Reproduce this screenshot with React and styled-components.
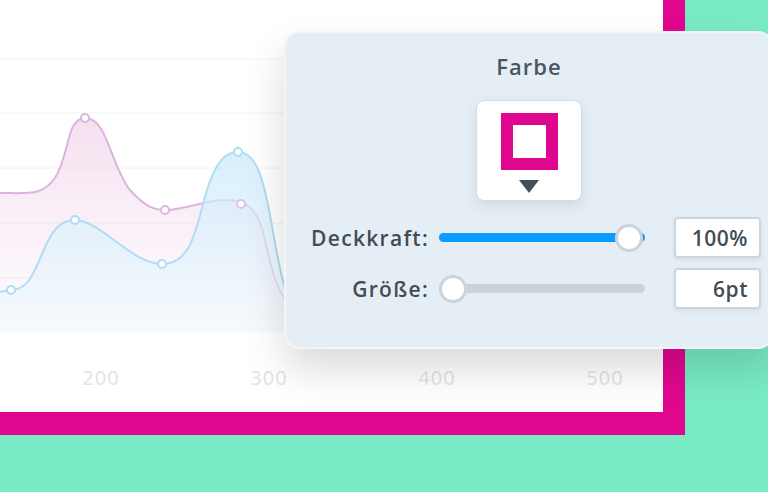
import React from 'react';
import styled, { createGlobalStyle } from 'styled-components';

const GlobalStyle = createGlobalStyle`
    html, body {
        margin: 0;
        padding: 0;
        width: 768px;
        height: 492px;
        overflow: hidden;
        background: #79ebc4;
        font-family: "Open Sans", Lato, sans-serif;
    }
`;

const Stage = styled.div`
    position: relative;
    width: 768px;
    height: 492px;
`;

const ChartCard = styled.div`
    width: 663px;
    height: 412px;
    background: #ffffff;
    border-right: 22px solid #e0078f;
    border-bottom: 23px solid #e0078f;
    display: flex;
    flex-direction: column;
`;

const Plot = styled.svg`
    display: block;
    width: 663px;
    height: 333px;
`;

const Axis = styled.div`
    flex: 1;
    display: grid;
    grid-template-columns: repeat(4, 168px);
    padding: 31px 0 0 17px;
`;

const Tick = styled.span`
    text-align: center;
    font-size: 20px;
    color: #e3e3e3;
    letter-spacing: 1px;
`;

const Panel = styled.div`
    position: absolute;
    left: 284px;
    top: 31px;
    width: 490px;
    box-sizing: border-box;
    padding: 19px 0 38px;
    background: #e6eef5;
    border: 2px solid #f3f6f8;
    border-radius: 16px;
    box-shadow: 0 20px 40px rgba(0, 0, 0, 0.15);
    display: flex;
    flex-direction: column;
    align-items: center;
`;

const Title = styled.div`
    font-size: 22px;
    font-weight: 600;
    line-height: 28px;
    letter-spacing: 1px;
    color: #4a565f;
`;

const Swatch = styled.div`
    margin-top: 20px;
    width: 106px;
    height: 101px;
    box-sizing: border-box;
    background: #ffffff;
    border: 1px solid #d3dbe1;
    border-radius: 8px;
    box-shadow: 0 6px 14px rgba(60, 80, 100, 0.12);
    display: flex;
    flex-direction: column;
    align-items: center;
    padding-top: 12px;
    gap: 10px;
`;

const ColorSquare = styled.div`
    width: 57px;
    height: 57px;
    box-sizing: border-box;
    border: 12px solid ${(props) => props.color};
`;

const Rows = styled.div`
    margin-top: 16px;
    align-self: stretch;
    display: grid;
    grid-template-columns: 125px 206px 87px;
    column-gap: 12px;
    row-gap: 10px;
    padding-left: 16px;
    align-items: center;

    & > :nth-child(3n) {
        margin-left: 17px;
    }
`;

const Label = styled.div`
    text-align: right;
    font-size: 21px;
    font-weight: 600;
    letter-spacing: 1.3px;
    color: #414d56;
    white-space: nowrap;
    margin-right: -2px;
`;

const Track = styled.div`
    position: relative;
    height: 9px;
    border-radius: 5px;
    background: #cbd3da;
`;

const Fill = styled.div`
    height: 100%;
    border-radius: 5px;
    background: #0a9cff;
`;

const Knob = styled.div`
    position: absolute;
    top: 50%;
    width: 28px;
    height: 28px;
    margin-top: -14px;
    box-sizing: border-box;
    border-radius: 50%;
    background: #ffffff;
    border: 3px solid #ccd4da;
`;

const ValueBox = styled.div`
    width: 87px;
    height: 41px;
    box-sizing: border-box;
    background: #ffffff;
    border: 2px solid #cdd5dc;
    border-radius: 4px;
    box-shadow: 0 2px 4px rgba(60, 80, 100, 0.1);
    padding-right: 11px;
    display: flex;
    align-items: center;
    justify-content: flex-end;
    font-size: 21px;
    font-weight: 600;
    letter-spacing: 0.5px;
    color: #414d56;
`;

const Slider = ({ value }) => (
    <Track>
        <Fill style={{ width: `${value * 100}%` }} />
        <Knob style={{ left: `calc(${value} * (100% - 28px) + ${value ? -2 : 0}px)` }} />
    </Track>
);

const pink = 'M0,193 C30,193 42,196 55,178 C70,155 66,118 85,118 C108,118 110,165 130,190 C145,207 155,210 165,210 C185,210 205,200 225,200 C245,200 256,206 263,232 C269,255 274,290 290,305';
const blue = 'M0,292 C6,291 8,290 11,290 C26,290 32,278 42,254 C52,230 60,220 75,220 C100,220 132,264 162,264 C192,264 196,228 206,193 C216,160 226,152 238,152 C256,152 263,178 270,215 C276,248 281,282 292,310';

const Dot = ({ x, y, color }) => <circle cx={x} cy={y} r='4' fill='#fff' stroke={color} strokeWidth='2' />;

const grid = [59, 113, 168, 223, 278];

const App = () => {
    return (
        <Stage>
            <GlobalStyle />
            <ChartCard>
                <Plot viewBox='0 0 663 333'>
                    <defs>
                        <linearGradient id='pinkFill' x1='0' y1='0' x2='0' y2='1'>
                            <stop offset='0' stopColor='#e8b9dc' stopOpacity='0.45' />
                            <stop offset='1' stopColor='#f6e8f2' stopOpacity='0.2' />
                        </linearGradient>
                        <linearGradient id='blueFill' x1='0' y1='0' x2='0' y2='1'>
                            <stop offset='0' stopColor='#c7e9fb' stopOpacity='0.7' />
                            <stop offset='1' stopColor='#f2f9fe' stopOpacity='0.6' />
                        </linearGradient>
                    </defs>
                    {grid.map((y) => (
                        <line key={y} x1='0' x2='663' y1={y} y2={y} stroke='#f2f2f2' strokeWidth='1' />
                    ))}
                    <path d={`${pink} L290,333 L0,333 Z`} fill='url(#pinkFill)' />
                    <path d={pink} fill='none' stroke='#dcb4e0' strokeWidth='2' />
                    <path d={`${blue} L292,333 L0,333 Z`} fill='url(#blueFill)' />
                    <path d={blue} fill='none' stroke='#b0dcf5' strokeWidth='2' />
                    <Dot x={85} y={118} color='#dcb4e0' />
                    <Dot x={165} y={210} color='#dcb4e0' />
                    <Dot x={241} y={204} color='#d6c4ec' />
                    <Dot x={11} y={290} color='#b0dcf5' />
                    <Dot x={75} y={220} color='#b0dcf5' />
                    <Dot x={162} y={264} color='#b0dcf5' />
                    <Dot x={238} y={152} color='#b0dcf5' />
                </Plot>
                <Axis>
                    {['200', '300', '400', '500'].map((t) => (
                        <Tick key={t}>{t}</Tick>
                    ))}
                </Axis>
            </ChartCard>

            <Panel>
                <Title>Farbe</Title>
                <Swatch>
                    <ColorSquare color='#e0078f' />
                    <svg width='20' height='13' viewBox='0 0 20 13'>
                        <path d='M0,0 L20,0 L10,13 Z' fill='#434f57' />
                    </svg>
                </Swatch>
                <Rows>
                    <Label>Deckkraft:</Label>
                    <Slider value={1} />
                    <ValueBox>100%</ValueBox>
                    <Label>Größe:</Label>
                    <Slider value={0} />
                    <ValueBox>6pt</ValueBox>
                </Rows>
            </Panel>
        </Stage>
    );
};

export default App;
